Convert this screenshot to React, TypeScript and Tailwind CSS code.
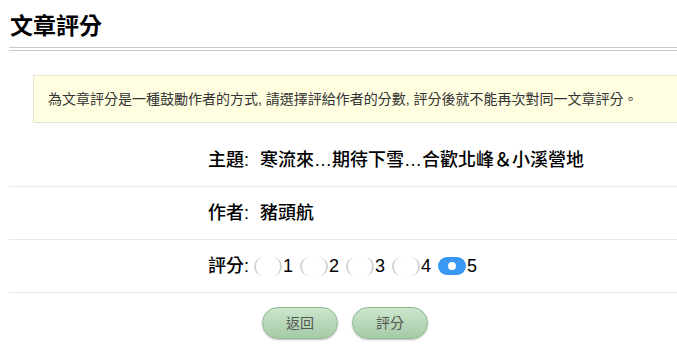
import React, { useState } from 'react';

const font = { fontFamily: '"Liberation Sans", "Noto Sans CJK TC", sans-serif' };

const Radio: React.FC<{ checked: boolean; onClick: () => void }> = ({ checked, onClick }) => {
    if (checked) {
        return (
            <span
                onClick={onClick}
                className="inline-flex items-center justify-center w-[28px] h-[18px] rounded-full bg-[#3b97f4] cursor-pointer"
            >
                <span className="block w-[8px] h-[8px] rounded-full bg-white" />
            </span>
        );
    }
    return (
        <span
            onClick={onClick}
            className="inline-block w-[28px] h-[19px] rounded-full border-l-2 border-r-2 border-[#d2d2d2] bg-white cursor-pointer"
        />
    );
};

const App: React.FC = () => {
    const [score, setScore] = useState(5);

    return (
        <div className="w-[677px] h-[359px] overflow-hidden bg-white text-black" style={font}>
            <div className="pl-[9px]">
                <h1 className="pl-[1px] pt-[12px] h-[47px] text-[23px] leading-[28px] font-bold">文章評分</h1>
                <div className="h-[4px] border-t border-b border-[#c9c9c9]" />

                <div className="ml-[24px] mt-[24px] h-[48px] flex items-center pl-[14px] bg-[#fffee1] border border-r-0 border-[#e4e4cf] text-[14px] text-[#333]">
                    為文章評分是一種鼓勵作者的方式, 請選擇評給作者的分數, 評分後就不能再次對同一文章評分。
                </div>

                <div className="mt-[12px]">
                    <div className="h-[52px] flex items-center pl-[199px] text-[18px] font-medium border-b border-[#eaeaea]">
                        <span className="w-[52px]">主題:</span>
                        <span>寒流來…期待下雪…合歡北峰＆小溪營地</span>
                    </div>
                    <div className="h-[53px] flex items-center pl-[199px] text-[18px] font-medium border-b border-[#eaeaea]">
                        <span className="w-[52px]">作者:</span>
                        <span>豬頭航</span>
                    </div>
                    <div className="h-[53px] flex items-center pl-[199px] text-[18px] font-medium border-b border-[#eaeaea]">
                        <span className="mr-[5px]">評分:</span>
                        {[1, 2, 3, 4, 5].map((n) => (
                            <label key={n} className="inline-flex items-center mr-[7px]">
                                <Radio checked={score === n} onClick={() => setScore(n)} />
                                <span className="ml-[1px]">{n}</span>
                            </label>
                        ))}
                    </div>
                </div>

                <div className="flex gap-[14px] pl-[253px] mt-[14px]">
                    <button className="w-[76px] h-[32px] rounded-full border border-[#8fb890] bg-gradient-to-b from-[#cce6cc] to-[#a5cba6] text-[14px] text-[#555] shadow-[0_1px_2px_rgba(0,0,0,0.25)]">
                        返回
                    </button>
                    <button className="w-[76px] h-[32px] rounded-full border border-[#8fb890] bg-gradient-to-b from-[#cce6cc] to-[#a5cba6] text-[14px] text-[#555] shadow-[0_1px_2px_rgba(0,0,0,0.25)]">
                        評分
                    </button>
                </div>
            </div>
        </div>
    );
};

export default App;
